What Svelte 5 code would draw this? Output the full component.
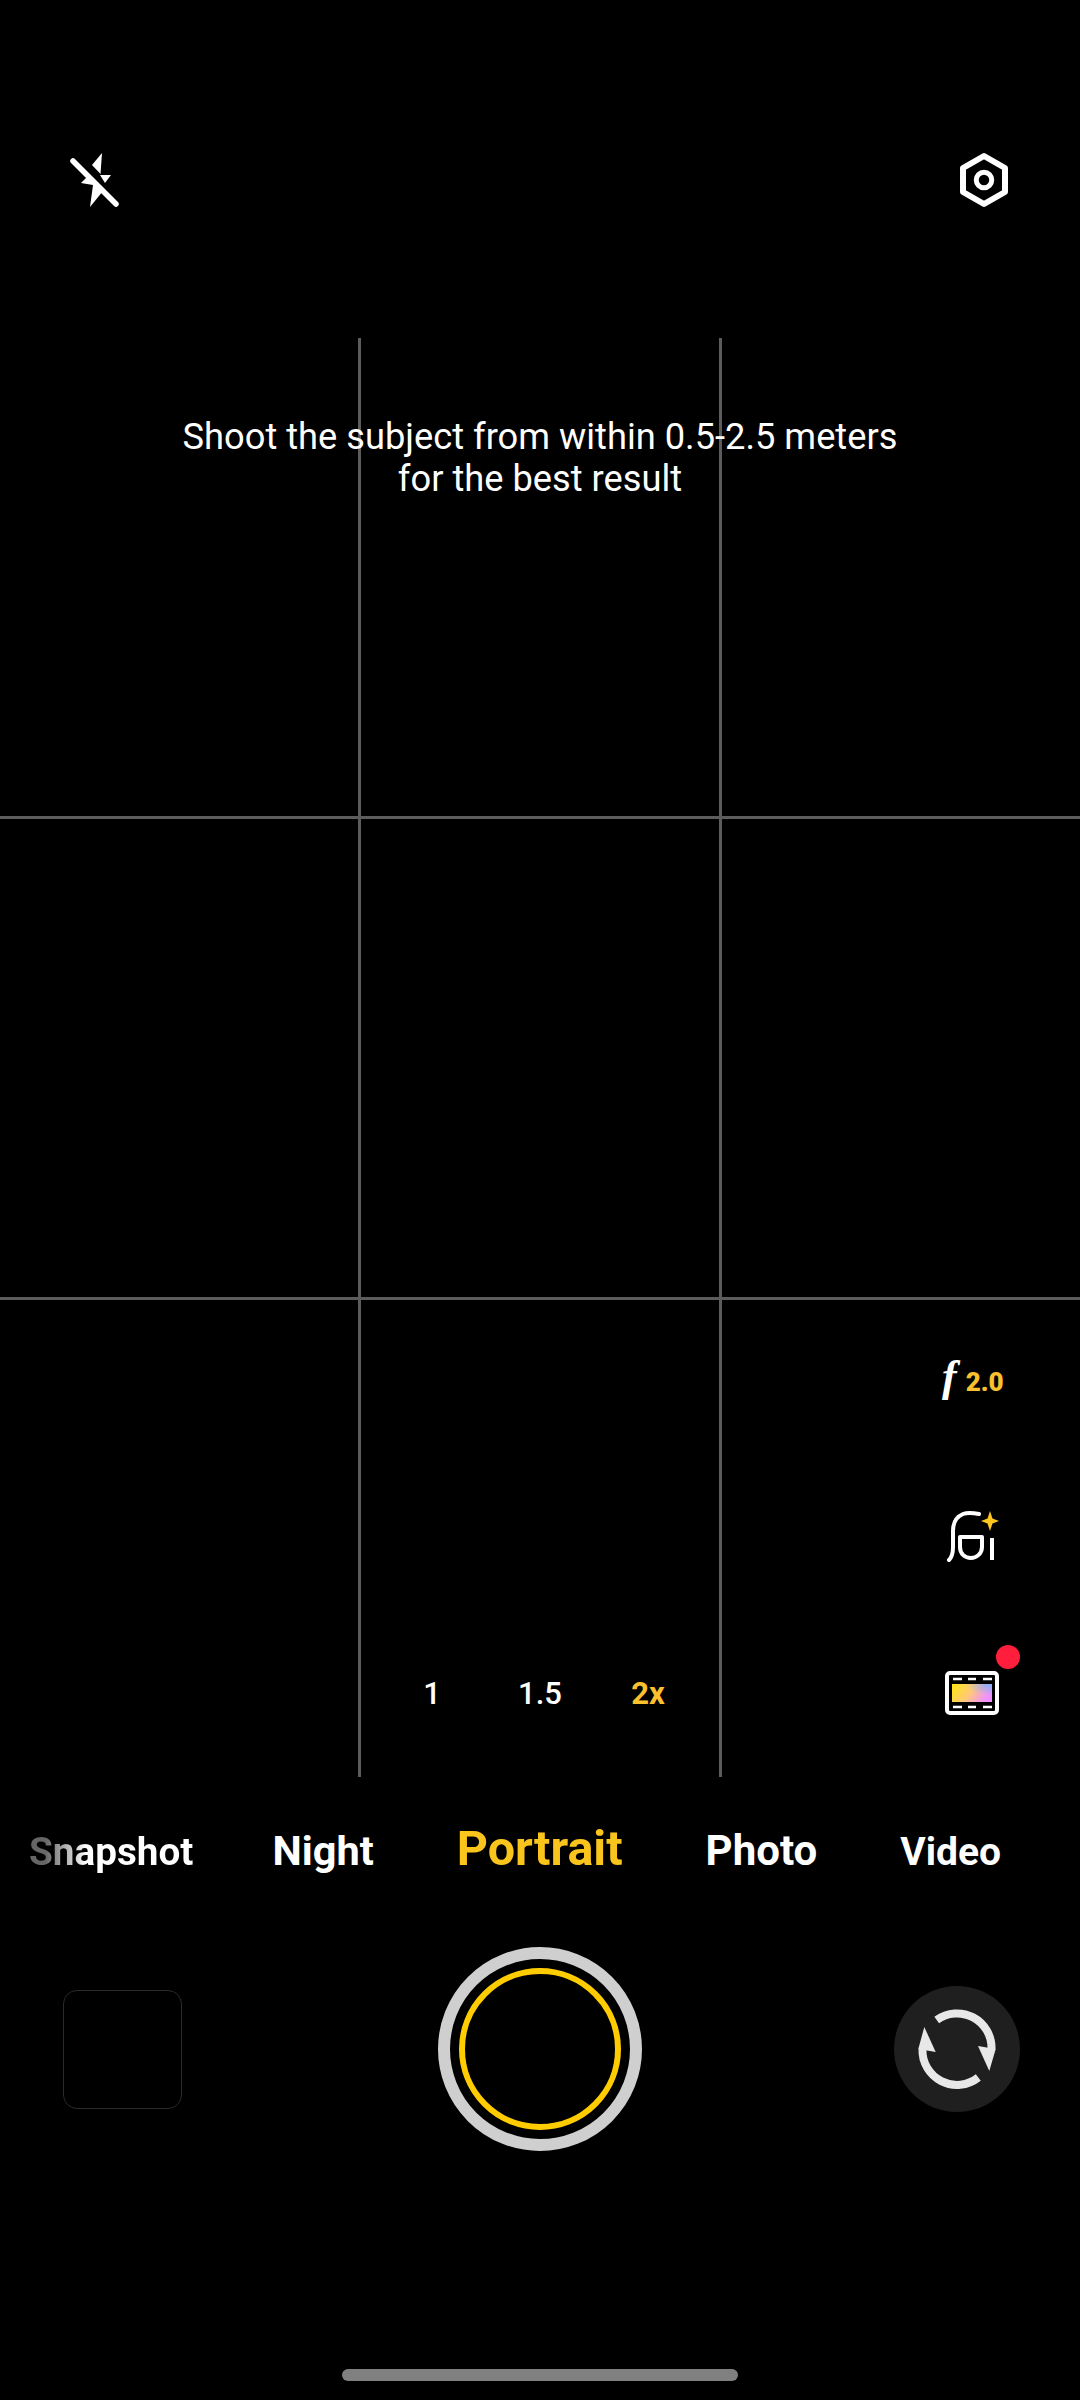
<script>
  const modes = [
    { label: 'Snapshot', cls: 'fade' },
    { label: 'Night', cls: 'night' },
    { label: 'Portrait', cls: 'active' },
    { label: 'Photo', cls: 'photo' },
    { label: 'Video', cls: 'video' }
  ];
  const zooms = ['1', '1.5', '2x'];
</script>

<main class="screen">
  <header class="top">
    <svg class="flash" width="60" height="60" viewBox="0 0 60 60">
      <path d="M37 3 L27 15 L35.5 24 Z" fill="#fff" />
      <path d="M35 25 L46 25 L40 33 Z" fill="#fff" />
      <path d="M8 11 L51 54" stroke="#000" stroke-width="10" />
      <path d="M24 25 L16 33 L28 35 L25 57 L38 41 Z" fill="#fff" />
      <path d="M8 11 L51 54" stroke="#fff" stroke-width="5.5" stroke-linecap="round" />
    </svg>
    <svg class="gear" width="60" height="60" viewBox="0 0 60 60">
      <path d="M30 6 L51 18 V42 L30 54 L9 42 V18 Z" fill="none" stroke="#fff" stroke-width="6" stroke-linejoin="round" />
      <circle cx="30" cy="30" r="7.75" fill="none" stroke="#fff" stroke-width="5" />
    </svg>
  </header>

  <section class="finder">
    <div class="grid">
      {#each Array(9) as _}
        <div class="cell"></div>
      {/each}
    </div>
    <p class="hint">Shoot the subject from within 0.5-2.5 meters<br />for the best result</p>

    <div class="tools">
      <div class="aperture"><span class="fn">f</span><span class="num">2.0</span></div>
      <svg width="60" height="60" viewBox="0 0 60 60">
        <path d="M39 9 C34 8 28 7 23 9 C16 12 13 19 13 26 V42 C13 48 12 52 9 55" fill="none" stroke="#fff" stroke-width="4" stroke-linecap="round" />
        <path d="M20 32 H42 V42 C42 49 36 53 31 53 C25 53 20 49 20 42 Z" fill="none" stroke="#fff" stroke-width="4" stroke-linejoin="round" />
        <path d="M52 33 V55" stroke="#fff" stroke-width="4" />
        <path d="M50 6 L52.5 13.5 L59 16 L52.5 18.5 L50 26 L47.5 18.5 L41 16 L47.5 13.5 Z" fill="#ffc61f" />
      </svg>
      <div class="film">
        <span class="dot"></span>
        <svg width="60" height="48" viewBox="0 0 60 48">
          <defs>
            <linearGradient id="rainbow" x1="0" y1="0" x2="1" y2="0.3">
              <stop offset="0" stop-color="#ffe610" />
              <stop offset="0.55" stop-color="#ffc878" />
              <stop offset="1" stop-color="#f090ff" />
            </linearGradient>
            <radialGradient id="sky" cx="1" cy="0" r="0.65">
              <stop offset="0" stop-color="#80b0ff" />
              <stop offset="1" stop-color="#80b0ff" stop-opacity="0" />
            </radialGradient>
          </defs>
          <rect x="7" y="3" width="50" height="40" rx="3" fill="none" stroke="#fff" stroke-width="4" />
          <rect x="12" y="14" width="40" height="18" fill="url(#rainbow)" />
          <rect x="12" y="14" width="40" height="18" fill="url(#sky)" />
          <path d="M13 9 H22 M28 9 H36 M43 9 H52 M13 37 H22 M28 37 H36 M43 37 H52" stroke="#fff" stroke-width="2.5" />
        </svg>
      </div>
    </div>

    <div class="zooms">
      {#each zooms as z, i}
        <span class:on={i === 2}>{z}</span>
      {/each}
    </div>
  </section>

  <nav class="modes">
    {#each modes as m}
      <span class={m.cls}>{m.label}</span>
    {/each}
  </nav>

  <section class="controls">
    <div class="thumb"></div>
    <div class="shutter"><div class="inner"></div></div>
    <div class="flip">
      <svg width="84" height="84" viewBox="0 0 84 84">
        <path d="M21.7 13 A34.5 34.5 0 0 1 76.5 42" fill="none" stroke="#e8e8e8" stroke-width="8" />
        <path d="M63.3 70.5 A34.5 34.5 0 0 1 7.5 42" fill="none" stroke="#e8e8e8" stroke-width="8" />
        <path d="M9.3 20 L20.7 45 L3.3 42 Z" fill="#e8e8e8" />
        <path d="M63 39 L74.3 64 L80.7 42 Z" fill="#e8e8e8" />
      </svg>
    </div>
  </section>

  <div class="home"></div>
</main>

<style>
  :global(body) {
    margin: 0;
    background: #000;
  }
  .screen {
    width: 1080px;
    height: 2400px;
    background: #000;
    color: #fff;
    font-family: Roboto, sans-serif;
    display: flex;
    flex-direction: column;
    overflow: hidden;
  }
  .top {
    height: 338px;
    padding: 150px 66px 0 65px;
    box-sizing: border-box;
    display: flex;
    justify-content: space-between;
    align-items: flex-start;
  }
  .finder {
    position: relative;
    height: 1439px;
  }
  .grid {
    height: 100%;
    display: grid;
    grid-template-columns: 361px 361px 358px;
    grid-template-rows: 481px 481px 477px;
  }
  .cell {
    border-right: 3px solid #5c5c5c;
    border-bottom: 3px solid #5c5c5c;
  }
  .cell:nth-child(3n) {
    border-right: 0;
  }
  .cell:nth-child(n + 7) {
    border-bottom: 0;
  }
  .hint {
    position: absolute;
    left: 0;
    right: 0;
    top: 78px;
    margin: 0;
    text-align: center;
    font-size: 36.25px;
    line-height: 42px;
  }
  .tools {
    position: absolute;
    left: 940px;
    top: 1018px;
    width: 60px;
    display: flex;
    flex-direction: column;
    align-items: flex-start;
    gap: 105px;
  }
  .aperture {
    display: flex;
    align-items: baseline;
    height: 44px;
    margin-left: 2px;
  }
  .fn {
    font-family: 'Liberation Serif', serif;
    font-style: italic;
    font-weight: 700;
    font-size: 44px;
    line-height: 42px;
  }
  .num {
    font-size: 26px;
    font-weight: 900;
    color: #fbc02d;
    margin-left: 9px;
    white-space: nowrap;
  }
  .film {
    position: relative;
    height: 48px;
  }
  .dot {
    position: absolute;
    left: 56px;
    top: -25px;
    width: 24px;
    height: 24px;
    border-radius: 50%;
    background: #ff1f3d;
  }
  .zooms {
    position: absolute;
    left: 0;
    right: 0;
    top: 1337px;
    display: flex;
    justify-content: center;
    font-size: 31px;
    font-weight: 500;
  }
  .zooms span {
    width: 108px;
    text-align: center;
  }
  .zooms .on {
    color: #fbc02d;
    font-weight: 700;
  }
  .modes {
    height: 135px;
    box-sizing: border-box;
    padding: 42px 0 0 29px;
    display: flex;
    align-items: baseline;
    gap: 83px;
    font-weight: 700;
    line-height: 60px;
    white-space: nowrap;
  }
  .fade {
    font-size: 38.7px;
    margin-right: -4px;
    background: linear-gradient(90deg, #666 0 10%, #fff 35%);
    -webkit-background-clip: text;
    background-clip: text;
    color: transparent;
  }
  .night { font-size: 41.5px; }
  .active {
    font-size: 48.5px;
    color: #f9c51d;
  }
  .photo { font-size: 42px; }
  .video { font-size: 39px; }
  .controls {
    height: 274px;
    padding: 0 60px;
    display: grid;
    grid-template-columns: 1fr auto 1fr;
    align-items: center;
    box-sizing: border-box;
  }
  .thumb {
    width: 119px;
    height: 119px;
    margin-left: 3px;
    box-sizing: border-box;
    border: 1px solid #2a2a2a;
    border-radius: 14px;
  }
  .shutter {
    width: 204px;
    height: 204px;
    box-sizing: border-box;
    border: 12px solid #cfcfcf;
    border-radius: 50%;
    display: flex;
    align-items: center;
    justify-content: center;
  }
  .inner {
    width: 162px;
    height: 162px;
    box-sizing: border-box;
    border: 6px solid #ffcc00;
    border-radius: 50%;
  }
  .flip {
    justify-self: end;
    width: 126px;
    height: 126px;
    border-radius: 50%;
    background: #1f1f1f;
    display: flex;
    align-items: center;
    justify-content: center;
  }
  .home {
    width: 396px;
    height: 12px;
    margin: 183px auto 0;
    border-radius: 6px;
    background: #808080;
  }
</style>
